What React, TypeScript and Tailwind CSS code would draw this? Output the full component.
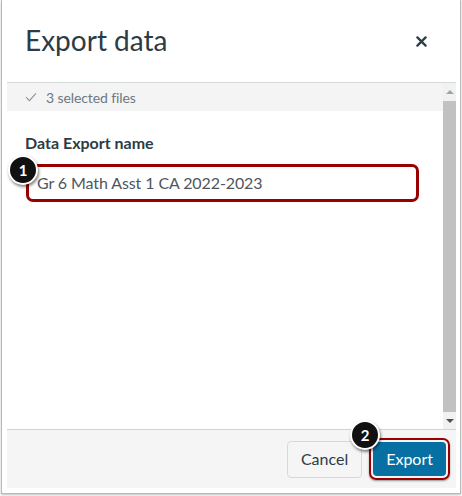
import React from "react";

function Badge({ n }: { n: string }) {
  return (
    <div className="w-[30px] h-[30px] rounded-full bg-[#111] border-2 border-white shadow-[1px_2px_3px_rgba(0,0,0,0.5)] flex items-center justify-center text-white text-[15px] font-bold">
      {n}
    </div>
  );
}

export default function App() {
  return (
    <div className="w-[462px] h-[496px] bg-white overflow-hidden font-['Lato','Liberation_Sans',sans-serif]">
      <div className="ml-[1px] w-[460px] h-[494px] border-x border-b border-[#b4babe] shadow-[0_1px_2px_rgba(0,0,0,0.25)] flex flex-col">
        {/* header */}
        <div className="h-[82px] shrink-0 flex items-center justify-between pl-[23px] pr-[33px]">
          <h1 className="text-[28px] text-[#2d3b45] leading-none pb-[2px]">Export data</h1>
          <svg className="w-[11px] h-[11px]" viewBox="0 0 12 12">
            <path d="M1.5 1.5l9 9M10.5 1.5l-9 9" stroke="#2d3b45" strokeWidth="2.4" strokeLinecap="round" />
          </svg>
        </div>

        {/* body */}
        <div className="ml-[5px] mr-[4px] h-[347px] shrink-0 flex border-t border-[#d3dad7]">
          <div className="flex-1 relative">
            <div className="h-[28px] bg-[#f4f4f4] flex items-center pl-[18px] text-[14px] text-[#6d7883] tracking-[-0.1px]">
              <svg className="w-[12px] h-[10px] mr-[9px]" viewBox="0 0 12 10">
                <path d="M1 5.2l3.4 3.4L11 1.4" fill="none" stroke="#8a949c" strokeWidth="1.1" />
              </svg>
              3 selected files
            </div>
            <div className="pl-[18px] pt-[24px] text-[16px] font-bold text-[#2d3b45] leading-none">
              Data Export name
            </div>
            <div className="ml-[19px] mt-[13px] w-[393px] h-[38px] rounded-[7px] border-[3px] border-[#990000] flex items-center pl-[8px] text-[16px] text-[#4f565d] tracking-[-0.1px]">
              Gr 6 Math Asst 1 CA 2022-2023
            </div>
            <div className="absolute left-[1px] top-[72px]">
              <Badge n="1" />
            </div>
          </div>
          {/* scrollbar */}
          <div className="w-[13px] bg-[#f1f1f1] flex flex-col items-center">
            <div className="h-[18px] flex items-center justify-center">
              <div className="w-0 h-0 border-x-[4px] border-x-transparent border-b-[4px] border-b-[#a3a3a3]" />
            </div>
            <div className="w-[13px] flex-1 bg-[#c1c1c1]" />
            <div className="h-[17px] flex items-center justify-center">
              <div className="w-0 h-0 border-x-[4px] border-x-transparent border-t-[4px] border-t-[#505050]" />
            </div>
          </div>
        </div>

        {/* footer */}
        <div className="ml-[5px] mr-[4px] h-[59px] shrink-0 bg-[#f5f5f5] border-t border-[#d0d4d6] flex items-center justify-end pr-[6px] gap-[7px]">
          <button className="h-[37px] px-[13px] rounded-[4px] border border-[#d5d9dc] bg-[#f5f5f5] text-[16px] text-[#2d3b45]">
            Cancel
          </button>
          <div className="relative">
            <div className="p-[2px] rounded-[7px] border-[2px] border-[#990000] shadow-[0_1px_2px_rgba(0,0,0,0.4)]">
              <button className="h-[34px] px-[13px] rounded-[4px] bg-[#0770a3] text-[16px] text-white">
                Export
              </button>
            </div>
            <div className="absolute left-[-19px] top-[-18px]">
              <Badge n="2" />
            </div>
          </div>
        </div>
      </div>
    </div>
  );
}
